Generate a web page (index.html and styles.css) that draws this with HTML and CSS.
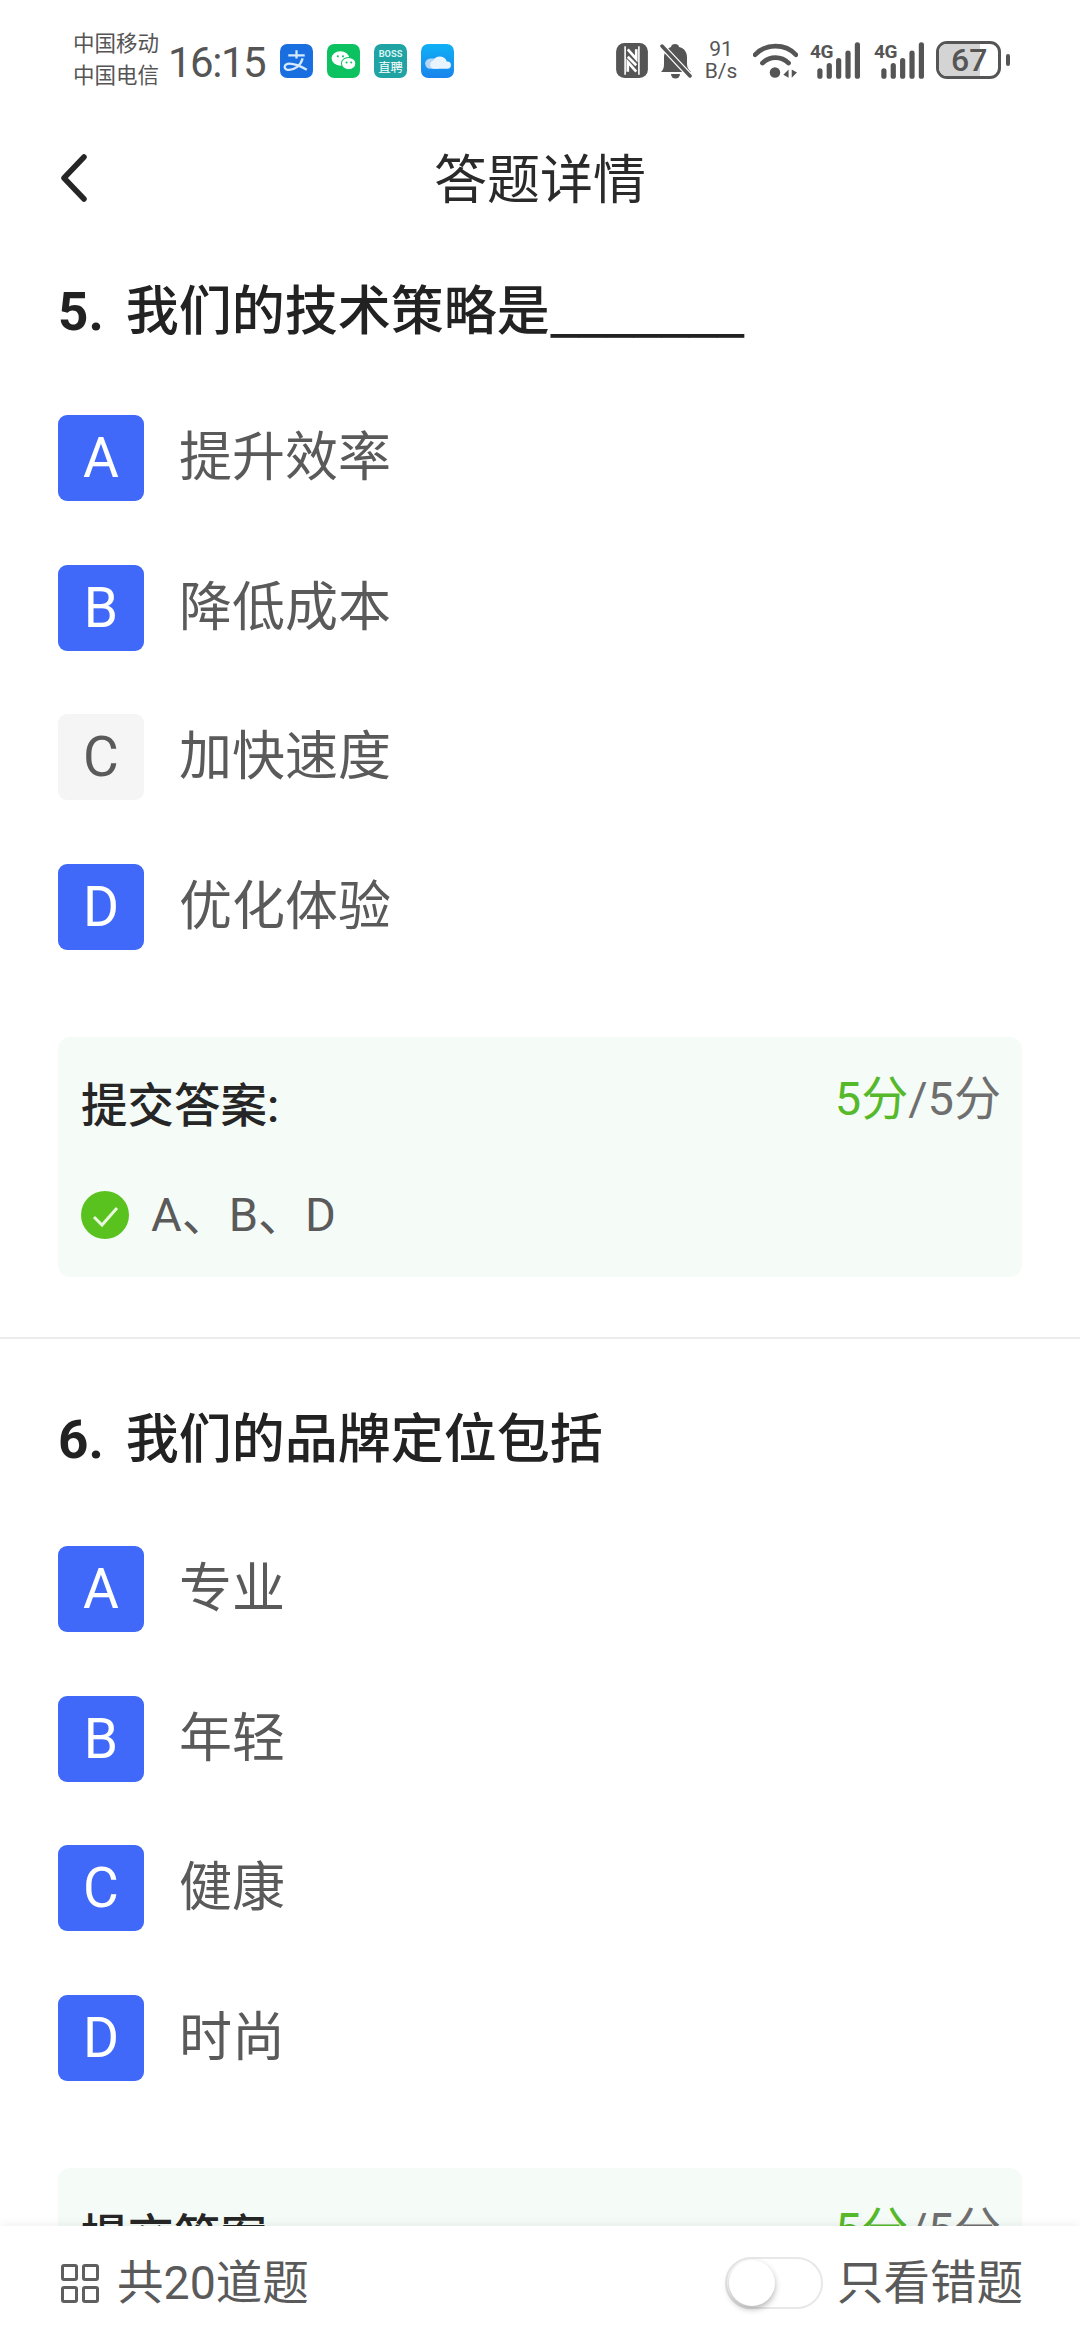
FILE: index.html
```html
<!DOCTYPE html>
<html lang="zh-CN">
<head>
<meta charset="utf-8">
<title>答题详情</title>
<link rel="stylesheet" href="styles.css">
</head>
<body>
<div class="screen">
  <header class="status">
    <div class="carriers"><span>中国移动</span><span>中国电信</span></div>
    <div class="clock">16:15</div>
    <div class="apps">
      <svg class="app" viewBox="0 0 32 33"><rect width="32" height="33" rx="7" fill="#1a6fe0"/><path d="M8 11h16M16 6v8M22 14c-2 7-8 12-15 11-4-1-3-6 2-6 6 0 12 3 17 6" fill="none" stroke="#d5e9ff" stroke-width="2.200"/></svg>
      <svg class="app" viewBox="0 0 32 33"><rect width="32" height="33" rx="7" fill="#0cc160"/><ellipse cx="13" cy="14" rx="8.500" ry="7" fill="#fff"/><ellipse cx="21" cy="19" rx="7" ry="6" fill="#fff" stroke="#0cc160"/><circle cx="10.500" cy="12" r="1" fill="#0cc160"/><circle cx="15.500" cy="12" r="1" fill="#0cc160"/><circle cx="19" cy="18" r="1" fill="#0cc160"/><circle cx="23.500" cy="18" r="1" fill="#0cc160"/></svg>
      <svg class="app" viewBox="0 0 32 33"><rect width="32" height="33" rx="7" fill="#1fa3a3"/><text x="16" y="13" text-anchor="middle" class="app-boss">BOSS</text><text x="16" y="27" text-anchor="middle" class="app-zp">直聘</text></svg>
      <svg class="app" viewBox="0 0 32 33"><defs><linearGradient id="sky" x1="0" y1="0" x2="0" y2="1"><stop offset="0" stop-color="#0fb0f5"/><stop offset="1" stop-color="#1a84ec"/></linearGradient></defs><rect width="32" height="33" rx="7" fill="url(#sky)"/><path d="M9 24a5 5 0 0 1 0-10h8v10z" fill="#b5d6f7"/><path d="M14 24a4 4 0 0 1-2-8 7 7 0 0 1 13 1 3.500 3.500 0 0 1 1 7z" fill="#e9f4fd"/></svg>
    </div>
    <div class="indicators">
      <svg class="ico-nfc" viewBox="0 0 30 33"><rect width="30" height="33" rx="8" fill="#555"/><path d="M8.500 3v27M21.500 3v27" stroke="#fff" stroke-width="1.500" fill="none"/><path d="M11 6l8 9v-9M19 27l-8-9v9M11 13l8 8" stroke="#fff" stroke-width="2.500" fill="none"/></svg>
      <svg class="ico-bell" viewBox="0 0 32 35"><path d="M15 1c2 0 4 1 4 3 5 1 8 5 8 10v7c0 4 2 6 4 8H1c2-2 3-4 3-8v-7c0-5 4-9 7-10 0-2 2-3 4-3z" fill="#555"/><path d="M11 31h9a4.500 4.500 0 0 1-9 0z" fill="#555"/><path d="M1 2l29 31" stroke="#fff" stroke-width="6"/><path d="M2 3l28 30" stroke="#555" stroke-width="3.500" stroke-linecap="round"/></svg>
      <div class="speed"><span>91</span><span>B/s</span></div>
      <svg class="ico-wifi" viewBox="0 0 43 35"><path d="M2 12C12 1 31 1 41 12" stroke="#555" stroke-width="4.500" fill="none" stroke-linecap="round"/><path d="M9 20c7-7 18-7 25 0" stroke="#555" stroke-width="4.500" fill="none" stroke-linecap="round"/><circle cx="21" cy="29" r="5" fill="#555"/><path d="M34 26v8l-5-3zM37 26v8l5-5z" fill="#555"/></svg>
      <div class="signal"><span class="net">4G</span><svg viewBox="0 0 48 35"><g fill="#555"><rect x="7" y="25" width="5" height="10" rx="2.500"/><rect x="16" y="20" width="5" height="15" rx="2.500"/><rect x="25" y="15" width="5" height="20" rx="2.500"/><rect x="34" y="8" width="5" height="27" rx="2.500"/><rect x="43" y="0" width="5" height="35" rx="2.500"/></g></svg></div>
      <div class="signal"><span class="net">4G</span><svg viewBox="0 0 48 35"><g fill="#555"><rect x="7" y="25" width="5" height="10" rx="2.500"/><rect x="16" y="20" width="5" height="15" rx="2.500"/><rect x="25" y="15" width="5" height="20" rx="2.500"/><rect x="34" y="8" width="5" height="27" rx="2.500"/><rect x="43" y="0" width="5" height="35" rx="2.500"/></g></svg></div>
      <div class="battery"><div class="cell"><div class="fill"></div><span class="level">67</span></div><div class="nub"></div></div>
    </div>
  </header>

  <nav class="nav">
    <svg class="back" viewBox="0 0 28 48"><path d="M24 3L4 24l20 21" fill="none" stroke="#262626" stroke-width="5.500" stroke-linecap="round" stroke-linejoin="round"/></svg>
    <h1 class="nav-title">答题详情</h1>
  </nav>

  <main class="list">
    <section class="question first">
      <h2 class="q-title"><span class="q-no">5.</span>我们的技术策略是<span class="blank">_______</span></h2>
      <ul class="options">
        <li class="option"><span class="badge on">A</span><span class="opt-text">提升效率</span></li>
        <li class="option"><span class="badge on">B</span><span class="opt-text">降低成本</span></li>
        <li class="option"><span class="badge">C</span><span class="opt-text">加快速度</span></li>
        <li class="option"><span class="badge on">D</span><span class="opt-text">优化体验</span></li>
      </ul>
      <div class="result">
        <div class="result-head"><span class="result-label">提交答案:</span><span class="score"><em>5分</em>/5分</span></div>
        <div class="answer">
          <svg class="tick" viewBox="0 0 48 48"><circle cx="24" cy="24" r="24" fill="#59c21f"/><path d="M13 26l8 8 15-17" fill="none" stroke="#e8f8dc" stroke-width="3"/></svg>
          <span>A、B、D</span>
        </div>
      </div>
    </section>
    <section class="question second">
      <h2 class="q-title"><span class="q-no">6.</span>我们的品牌定位包括</h2>
      <ul class="options">
        <li class="option"><span class="badge on">A</span><span class="opt-text">专业</span></li>
        <li class="option"><span class="badge on">B</span><span class="opt-text">年轻</span></li>
        <li class="option"><span class="badge on">C</span><span class="opt-text">健康</span></li>
        <li class="option"><span class="badge on">D</span><span class="opt-text">时尚</span></li>
      </ul>
      <div class="result">
        <div class="result-head"><span class="result-label">提交答案:</span><span class="score"><em>5分</em>/5分</span></div>
      </div>
    </section>
  </main>

  <footer class="bar">
    <div class="bar-left">
      <svg class="grid-ico" viewBox="0 0 38 39"><g fill="none" stroke="#5f5f5f" stroke-width="3"><rect x="1.500" y="1.500" width="14" height="14" rx="1.500"/><rect x="22.500" y="1.500" width="14" height="14" rx="1.500"/><rect x="1.500" y="23.500" width="14" height="14" rx="1.500"/><rect x="22.500" y="23.500" width="14" height="14" rx="1.500"/></g></svg>
      <span class="bar-text">共20道题</span>
    </div>
    <div class="bar-right">
      <div class="switch"><div class="thumb"></div></div>
      <span class="bar-text">只看错题</span>
    </div>
  </footer>
</div>
</body>
</html>
```
FILE: styles.css
```css
* { box-sizing: border-box; margin: 0; padding: 0; }

html, body { background: #fff; }

body {
  font-family: Roboto, "Noto Sans CJK SC", sans-serif;
  color: #5a5a5a;
}

.screen {
  width: 1080px;
  height: 2340px;
  display: flex;
  flex-direction: column;
  overflow: hidden;
  background: #fff;
}

/* Status bar */
.status {
  height: 118px;
  flex: none;
  display: flex;
  align-items: flex-start;
  padding: 28px 0 0 73px;
  color: #555;
}

.carriers {
  display: flex;
  flex-direction: column;
  font-size: 21.500px;
  line-height: 32px;
  width: 95px;
}

.clock {
  font-size: 42px;
  line-height: 64px;
  padding-top: 3px;
  letter-spacing: -1.500px;
  width: 112px;
}

.apps {
  display: flex;
  gap: 14px;
  padding-top: 16px;
}

.app { width: 33px; height: 34px; display: block; }
.app-boss { font-size: 9px; font-weight: 700; fill: #d8f5f3; font-family: Roboto, sans-serif; }
.app-zp { font-size: 12px; fill: #fff; font-family: "Noto Sans CJK SC", sans-serif; }

.indicators {
  margin-left: auto;
  margin-right: 70px;
  padding-top: 13px;
  display: flex;
  align-items: center;
  gap: 12px;
  height: 38px;
  box-sizing: content-box;
}

.ico-nfc { width: 32px; height: 35px; }
.ico-bell { width: 32px; height: 37px; }
.ico-wifi { width: 45px; height: 37px; margin-left: 3px; }

.speed {
  display: flex;
  flex-direction: column;
  align-items: center;
  width: 34px;
  font-size: 21px;
  line-height: 22px;
  font-family: Roboto, sans-serif;
}

.signal { position: relative; width: 50px; height: 37px; }
.signal + .signal { margin-left: 2px; }
.signal svg { width: 50px; height: 37px; display: block; }

.net {
  position: absolute;
  left: 0;
  top: 0;
  font-size: 19px;
  line-height: 19px;
  font-weight: 700;
  letter-spacing: -0.500px;
}

.battery { display: flex; align-items: center; gap: 5px; }

.cell {
  position: relative;
  width: 65px;
  height: 38px;
  border: 3px solid #555;
  border-radius: 11px;
  overflow: hidden;
}

.fill { width: 41px; height: 100%; background: #d4d4d4; }

.level {
  position: absolute;
  left: 12px;
  top: 0;
  font-size: 32px;
  line-height: 32px;
  font-weight: 500;
}

.nub { width: 4px; height: 12px; background: #555; border-radius: 2px; }

/* Navigation */
.nav {
  height: 120px;
  flex: none;
  position: relative;
  display: flex;
  align-items: center;
  justify-content: center;
}

.back { position: absolute; left: 60px; top: 36px; width: 28px; height: 48px; }

.nav-title {
  font-size: 53px;
  line-height: 70px;
  padding-top: 5px;
  font-weight: 400;
  color: #2a2a2a;
}

/* Question list */
.list { flex: 1; min-height: 0; overflow: hidden; }

.question.first { padding: 34px 0 60px; border-bottom: 2px solid #ececec; }

.question.second { padding-top: 61px; }

.q-title {
  padding-left: 58px;
  font-size: 53px;
  line-height: 70px;
  color: #222;
  font-family: "Noto Sans CJK SC", sans-serif;
  font-weight: 500;
}

.q-no { margin-right: 22px; font-family: Roboto, sans-serif; font-weight: 700; }

.blank { letter-spacing: -2.200px; }

.options {
  list-style: none;
  margin-top: 68px;
  padding-left: 58px;
  display: flex;
  flex-direction: column;
  gap: 63.700px;
}

.second .options { margin-top: 71px; }

.option { display: flex; align-items: center; gap: 35px; height: 86px; }

.badge {
  width: 86px;
  height: 86px;
  border-radius: 9px;
  background: #f5f5f5;
  color: #5a5a5a;
  display: flex;
  align-items: center;
  justify-content: center;
  font-size: 55px;
}

.badge.on { background: #4169f9; color: #fff; }

.opt-text { font-size: 53px; line-height: 70px; color: #5a5a5a; }

.result {
  margin: 87px 58px 0;
  height: 240px;
  padding: 0 21px 0 23px;
  border-radius: 12px;
  background: #f5fbf7;
}

.result-head {
  height: 128px;
  display: flex;
  justify-content: space-between;
  align-items: center;
}

.result-label {
  font-size: 46.500px;
  font-weight: 500;
  color: #262626;
}

.score { font-size: 47px; color: #6f6f6f; margin-bottom: 14px; }
.score em { font-style: normal; color: #55b92b; }

.answer {
  display: flex;
  align-items: center;
  gap: 22px;
  margin-top: 20px;
  font-size: 47px;
  line-height: 60px;
}

.tick { width: 48px; height: 48px; flex: none; }

/* Bottom bar */
.bar {
  height: 114px;
  flex: none;
  position: relative;
  background: #fff;
  box-shadow: 0 -3px 8px rgba(0, 0, 0, 0.05);
  display: flex;
  justify-content: space-between;
  align-items: center;
  padding: 0 57px 0 61px;
}

.bar-left, .bar-right { display: flex; align-items: center; }

.grid-ico { width: 38px; height: 39px; margin-right: 18px; }

.bar-text { font-size: 46.500px; line-height: 60px; color: #5a5a5a; }

.switch {
  position: relative;
  width: 98px;
  height: 52px;
  margin-right: 14px;
  border: 2px solid #e8e8e8;
  border-radius: 26px;
  background: #fff;
}

.thumb {
  position: absolute;
  left: 2px;
  top: 1px;
  width: 46px;
  height: 46px;
  border-radius: 50%;
  background: #fff;
  box-shadow: 0 3px 6px rgba(0, 0, 0, 0.3);
}
```
